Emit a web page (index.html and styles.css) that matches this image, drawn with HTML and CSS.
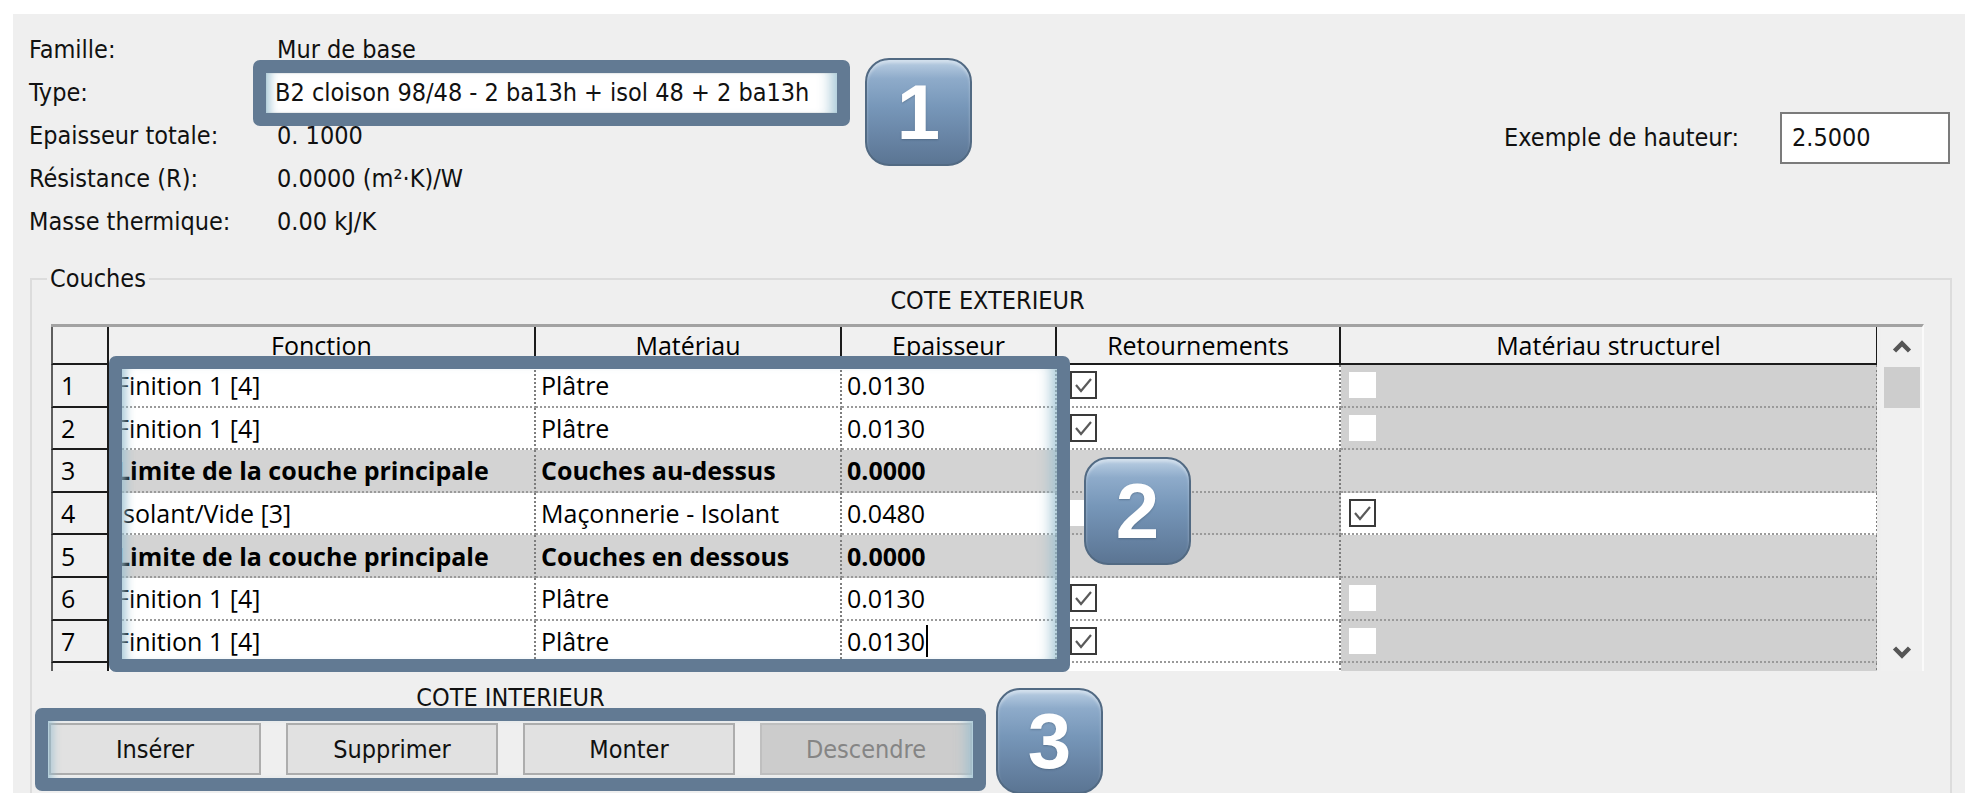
FILE: index.html
```html
<!DOCTYPE html>
<html lang="fr">
<head>
<meta charset="utf-8">
<title>Modifier l'assemblage</title>
<link rel="stylesheet" href="styles.css">
</head>
<body>
<div class="panel">
  <div class="top">
    <div class="props">
      <span class="lbl">Famille:</span><span class="val">Mur de base</span>
      <span class="lbl">Type:</span><span class="val"><span class="type-field">B2 cloison 98/48 - 2 ba13h + isol 48 + 2 ba13h</span></span>
      <span class="lbl">Epaisseur totale:</span><span class="val">0. 1000</span>
      <span class="lbl">Résistance (R):</span><span class="val">0.0000 (m²·K)/W</span>
      <span class="lbl">Masse thermique:</span><span class="val">0.00 kJ/K</span>
    </div>
    <div class="height">
      <span class="lbl">Exemple de hauteur:</span>
      <span class="input">2.5000</span>
    </div>
  </div>

  <fieldset class="layers">
    <legend>Couches</legend>
    <div class="side">COTE EXTERIEUR</div>
    <div class="grid-wrap">
      <div class="grid">
        <div class="row head">
          <div class="c num"></div>
          <div class="c">Fonction</div>
          <div class="c">Matériau</div>
          <div class="c">Epaisseur</div>
          <div class="c">Retournements</div>
          <div class="c">Matériau structurel</div>
        </div>
        <div class="row">
          <div class="c num">1</div>
          <div class="c">Finition 1 [4]</div>
          <div class="c">Plâtre</div>
          <div class="c">0.0130</div>
          <div class="c chk"><span class="box on"><svg viewBox="0 0 23 24"><polyline points="4,12 9,18 19,6"/></svg></span></div>
          <div class="c gray chk2"><span class="box blank"></span></div>
        </div>
        <div class="row">
          <div class="c num">2</div>
          <div class="c">Finition 1 [4]</div>
          <div class="c">Plâtre</div>
          <div class="c">0.0130</div>
          <div class="c chk"><span class="box on"><svg viewBox="0 0 23 24"><polyline points="4,12 9,18 19,6"/></svg></span></div>
          <div class="c gray chk2"><span class="box blank"></span></div>
        </div>
        <div class="row core">
          <div class="c num">3</div>
          <div class="c">Limite de la couche principale</div>
          <div class="c">Couches au-dessus</div>
          <div class="c">0.0000</div>
          <div class="c"></div>
          <div class="c"></div>
        </div>
        <div class="row">
          <div class="c num">4</div>
          <div class="c">Isolant/Vide [3]</div>
          <div class="c">Maçonnerie - Isolant</div>
          <div class="c">0.0480</div>
          <div class="c gray chk"><span class="box blank"></span></div>
          <div class="c chk2"><span class="box on"><svg viewBox="0 0 23 24"><polyline points="4,12 9,18 19,6"/></svg></span></div>
        </div>
        <div class="row core">
          <div class="c num">5</div>
          <div class="c">Limite de la couche principale</div>
          <div class="c">Couches en dessous</div>
          <div class="c">0.0000</div>
          <div class="c"></div>
          <div class="c"></div>
        </div>
        <div class="row">
          <div class="c num">6</div>
          <div class="c">Finition 1 [4]</div>
          <div class="c">Plâtre</div>
          <div class="c">0.0130</div>
          <div class="c chk"><span class="box on"><svg viewBox="0 0 23 24"><polyline points="4,12 9,18 19,6"/></svg></span></div>
          <div class="c gray chk2"><span class="box blank"></span></div>
        </div>
        <div class="row">
          <div class="c num">7</div>
          <div class="c">Finition 1 [4]</div>
          <div class="c">Plâtre</div>
          <div class="c">0.0130<span class="caret"></span></div>
          <div class="c chk"><span class="box on"><svg viewBox="0 0 23 24"><polyline points="4,12 9,18 19,6"/></svg></span></div>
          <div class="c gray chk2"><span class="box blank"></span></div>
        </div>
        <div class="row">
          <div class="c num"></div>
          <div class="c"></div>
          <div class="c"></div>
          <div class="c"></div>
          <div class="c"></div>
          <div class="c gray"></div>
        </div>
      </div>
      <div class="vscroll">
        <div class="arrow"><svg viewBox="0 0 20 13"><polyline points="2.5,11 10,3.5 17.5,11"/></svg></div>
        <div class="thumb"></div>
        <div class="arrow down"><svg viewBox="0 0 20 13"><polyline points="2.5,2 10,9.5 17.5,2"/></svg></div>
      </div>
    </div>
    <div class="actions">
      <div class="side">COTE INTERIEUR</div>
      <div class="buttons">
        <button class="btn">Insérer</button>
        <button class="btn">Supprimer</button>
        <button class="btn">Monter</button>
        <button class="btn" disabled>Descendre</button>
      </div>
    </div>
  </fieldset>

  <div class="callout c1"></div>
  <div class="badge b1">1</div>
  <div class="callout c2"></div>
  <div class="badge b2">2</div>
  <div class="callout c3"></div>
  <div class="badge b3">3</div>
</div>
</body>
</html>
```

FILE: styles.css
```css
* { box-sizing: border-box; }

html, body {
  margin: 0;
  background: #ffffff;
}

body {
  font-family: "DejaVu Sans Condensed", "Liberation Sans", Arial, sans-serif;
  font-size: 25px;
  color: #111;
}

.panel {
  position: relative;
  margin: 14px 0 0 13px;
  width: 1952px;
  height: 779px;
  background: #efefef;
  overflow: hidden;
  padding: 14px 15px 0 16px;
}

/* ---------- top properties ---------- */
.top {
  display: flex;
  justify-content: space-between;
  align-items: flex-start;
}

.props {
  display: grid;
  grid-template-columns: 248px auto;
  grid-auto-rows: 43px;
  align-items: center;
}

.lbl, .val { line-height: 30px; white-space: nowrap; }

.type-field {
  display: inline-block;
  margin-left: -10px;
  padding-left: 8px;
  width: 570px;
  height: 38px;
  line-height: 38px;
  background: #fff;
}

.height {
  display: flex;
  align-items: center;
  gap: 41px;
  margin-top: 84px;
}

.input {
  width: 170px;
  height: 52px;
  border: 2px solid #7b7b7b;
  background: #fff;
  padding-left: 10px;
  line-height: 48px;
}

/* ---------- group box ---------- */
.layers {
  margin: 21px -2px 0 1px;
  padding: 0 26px 60px 19px;
  border: 2px solid #dcdcdc;
  min-width: 0;
}

.layers legend {
  margin-left: -4px;
  padding: 0 3px;
  line-height: 30px;
}

.side {
  line-height: 28px;
  text-align: center;
}

.layers > .side { margin-top: -7px; }

/* ---------- data grid ---------- */
.grid-wrap {
  display: flex;
  margin-top: 9px;
  height: 347px;
  border-top: 3px solid #a2a2a2;
  border-right: 2px solid #fafafa;
}

.grid {
  width: 1827px;
  overflow: hidden;
  font-family: "Open Sans", "Noto Sans", sans-serif;
  font-size: 25px;
  color: #000;
}

.row {
  display: grid;
  grid-template-columns: 58px 427px 306px 215px 284px 537px;
  height: 42.6px;
}

.c {
  display: flex;
  align-items: center;
  padding-left: 5px;
  background: #fff;
  border-right: 2px dotted #7d7d7d;
  border-bottom: 2px dotted #9a9a9a;
  white-space: nowrap;
  overflow: hidden;
}

.c:nth-child(2) { padding-left: 7px; }

.c.num {
  background: #f0f0f0;
  border-left: 2px solid #5e5e5e;
  border-right: 2px solid #1b1b1b;
  border-bottom: 2px solid #1b1b1b;
  padding-left: 8px;
}

.row.head { height: 38px; }

.row.head .c {
  background: #f0f0f0;
  justify-content: center;
  padding-left: 0;
  border-right: 2px solid #1b1b1b;
  border-bottom: 2px solid #1b1b1b;
}

.row.head .c.num { border-left: 2px solid #5e5e5e; }

.row.core .c { background: #d3d3d3; font-weight: 700; }
.row.core .c.num { background: #f0f0f0; font-weight: 400; }

.c.gray { background: #d0d0d0; }

.c.chk { padding-left: 13px; }
.c.chk2 { padding-left: 8px; }

.box {
  display: block;
  width: 27px;
  height: 28px;
}

.box.on {
  border: 2px solid #3a3a3a;
  background: #fff;
}

.box.on svg {
  display: block;
  width: 100%;
  height: 100%;
  fill: none;
  stroke: #5a5a5a;
  stroke-width: 2.2;
}

.box.blank {
  width: 27px;
  height: 26px;
  background: #fff;
}

.caret {
  display: inline-block;
  width: 2px;
  height: 32px;
  margin-left: 1px;
  background: #000;
}

/* ---------- scrollbar ---------- */
.vscroll {
  margin-left: 4px;
  width: 41px;
  background: #f0f0f0;
  display: flex;
  flex-direction: column;
  align-items: center;
}

.arrow {
  height: 38px;
  width: 100%;
  display: flex;
  align-items: center;
  justify-content: center;
}

.arrow svg {
  width: 20px;
  height: 13px;
  fill: none;
  stroke: #555;
  stroke-width: 4.5;
  stroke-linejoin: miter;
}

.arrow.down { margin-top: auto; }

.thumb {
  margin-top: 2px;
  width: 36px;
  height: 41px;
  background: #cdcdcd;
}

/* ---------- buttons ---------- */
.actions {
  width: 923px;
  margin-left: -2px;
}

.actions .side { margin-top: 13px; }

.buttons {
  display: flex;
  gap: 25px;
  margin-top: 11px;
}

.btn {
  width: 212px;
  height: 52px;
  background: #e1e1e1;
  border: 2px solid #adadad;
  font-family: "DejaVu Sans Condensed", "Liberation Sans", Arial, sans-serif;
  font-size: 25px;
  color: #111;
  padding: 0;
}

.btn:disabled {
  background: #cccccc;
  border-color: #bfbfbf;
  color: #858585;
}

/* ---------- annotation overlays ---------- */
.callout {
  position: absolute;
  border: 13px solid #627a93;
  border-radius: 7px;
  pointer-events: none;
  box-shadow:
    inset 12px 0 10px -8px rgba(150, 190, 208, 0.85),
    inset -16px 0 14px -10px rgba(150, 190, 208, 0.85);
}

.c1 { left: 240px; top: 46px; width: 597px; height: 66px; }
.c2 { left: 96px; top: 342px; width: 961px; height: 316px; }
.c3 { left: 22px; top: 694px; width: 951px; height: 83px; }

.badge {
  position: absolute;
  width: 107px;
  height: 108px;
  border: 2px solid #526a83;
  border-radius: 24px;
  background: linear-gradient(#bcd0e4 0%, #8eabca 18%, #7797b9 45%, #6a87a8 70%, #5b7593 100%);
  box-shadow: inset 0 3px 3px rgba(255, 255, 255, 0.35);
  color: #fff;
  font-family: "Liberation Sans", Arial, sans-serif;
  font-weight: 700;
  font-size: 78px;
  line-height: 1;
  display: flex;
  align-items: center;
  justify-content: center;
  text-shadow: 0 1px 2px rgba(40, 60, 80, 0.35);
}

.b1 { left: 852px; top: 44px; }
.b2 { left: 1071px; top: 443px; }
.b3 { left: 983px; top: 674px; height: 106px; }
```
